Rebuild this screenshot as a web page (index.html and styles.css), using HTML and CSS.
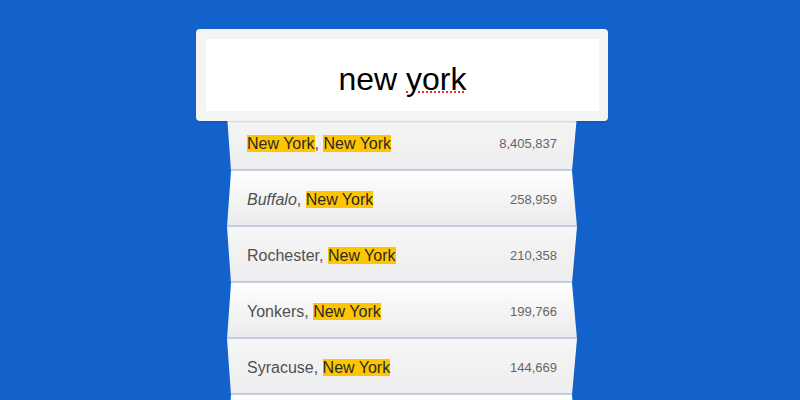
FILE: index.html
```html
<!DOCTYPE html>
<html lang="en">
<head>
<meta charset="utf-8">
<title>City search</title>
<link rel="stylesheet" href="styles.css">
</head>
<body>
<div class="wrap">
  <div class="search">
    <div class="input">new <span class="spell">york</span></div>
  </div>
  <ul class="list">
    <li class="item fold-a"><span class="name"><mark>New York</mark>, <mark>New York</mark></span><span class="pop">8,405,837</span></li>
    <li class="item fold-b"><span class="name"><em>Buffalo</em>, <mark>New York</mark></span><span class="pop">258,959</span></li>
    <li class="item fold-a"><span class="name">Rochester, <mark>New York</mark></span><span class="pop">210,358</span></li>
    <li class="item fold-b"><span class="name">Yonkers, <mark>New York</mark></span><span class="pop">199,766</span></li>
    <li class="item fold-a"><span class="name">Syracuse, <mark>New York</mark></span><span class="pop">144,669</span></li>
    <li class="item fold-b"></li>
  </ul>
</div>
</body>
</html>
```
FILE: styles.css
```css
html, body {
  margin: 0;
  padding: 0;
  height: 100%;
  overflow: hidden;
}
body {
  background: #1362cb;
  font-family: "Liberation Sans", Arial, sans-serif;
}
.wrap {
  width: 412px;
  margin-left: 196px;
  padding-top: 29px;
  display: flex;
  flex-direction: column;
  align-items: center;
}
.search {
  position: relative;
  z-index: 2;
  width: 412px;
  box-sizing: border-box;
  padding: 10px 9px 10px 10px;
  background: #f4f4f4;
  border-radius: 4px;
  box-shadow: 0 1px 2px rgba(0,0,0,0.15);
}
.input {
  background: #fff;
  height: 72px;
  box-sizing: border-box;
  padding-top: 4px;
  line-height: 72px;
  text-align: center;
  font-size: 32px;
  color: #000;
}
.spell {
  text-decoration: underline dotted #e03030;
  text-decoration-thickness: 2px;
  text-underline-offset: 1px;
}
.list {
  list-style: none;
  margin: -6px 0 0 0;
  padding: 0;
  width: 350px;
  display: flex;
  flex-direction: column;
}
.item {
  height: 56px;
  box-sizing: border-box;
  padding: 3px 20px 0;
  border-bottom: 2px solid #c3cde2;
  display: flex;
  align-items: center;
  justify-content: space-between;
  background: linear-gradient(#fbfbfb, #ebebeb);
}
.fold-a {
  clip-path: polygon(0 0, 100% 0, calc(100% - 5px) 100%, 4px 100%);
  background: linear-gradient(#f6f6f6, #ededed);
}
.fold-b {
  clip-path: polygon(4px 0, calc(100% - 5px) 0, 100% 100%, 0 100%);
  background: linear-gradient(#fefefe, #ebebeb);
}
.name {
  font-size: 16px;
  color: #505050;
}
.name em {
  font-style: italic;
}
mark {
  background: #ffc600;
  color: #2a2a2a;
}
.pop {
  font-size: 13px;
  color: #666;
}
```
